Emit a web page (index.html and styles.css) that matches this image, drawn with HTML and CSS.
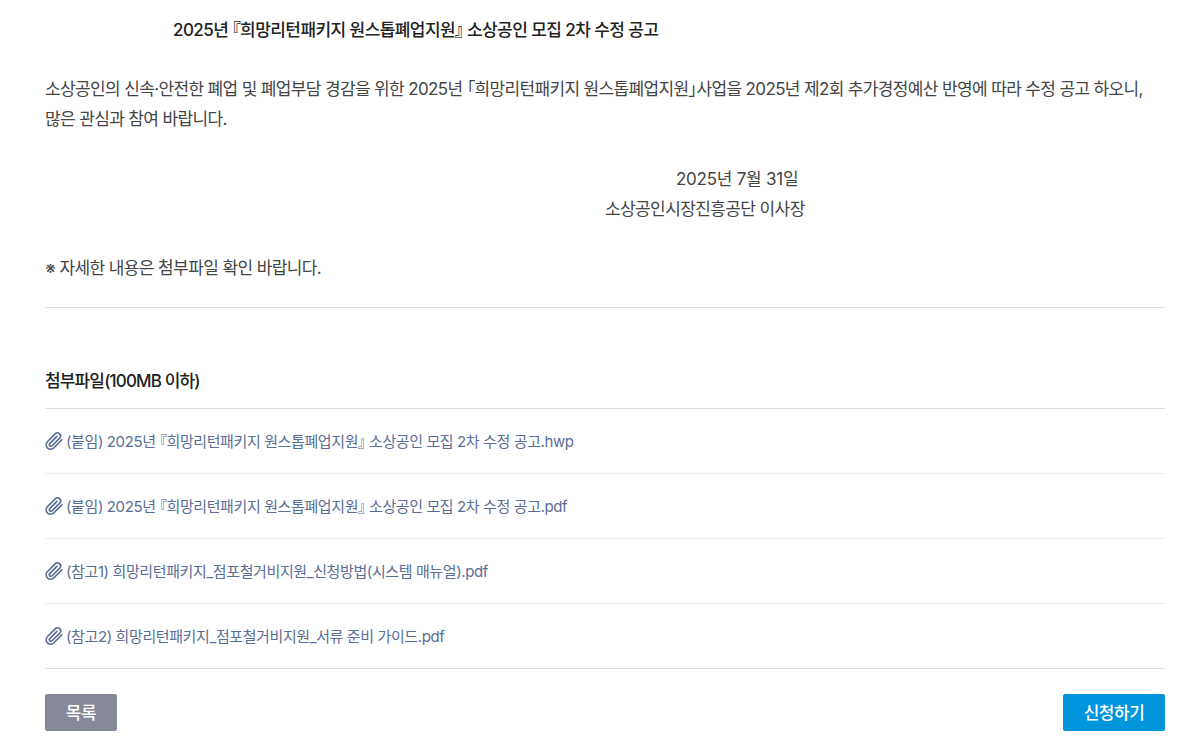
FILE: index.html
```html
<!DOCTYPE html>
<html lang="ko">
	<head>
		<meta charset="utf-8" />
		<title>공고</title>
		<link rel="stylesheet" href="styles.css">
	</head>
	<body>
		<div class="view">
			<!-- 본문 -->
			<div class="content">
				<p class="title">2025년 『희망리턴패키지 원스톱폐업지원』 소상공인 모집 2차 수정 공고</p>
				<p class="lead">소상공인의 신속·안전한 폐업 및 폐업부담 경감을 위한 2025년 「희망리턴패키지 원스톱폐업지원」사업을 2025년 제2회 추가경정예산 반영에 따라 수정 공고 하오니, 많은 관심과 참여 바랍니다.</p>
				<p class="date">2025년 7월 31일</p>
				<p class="sign">소상공인시장진흥공단 이사장</p>
				<p class="note">※ 자세한 내용은 첨부파일 확인 바랍니다.</p>
			</div>
			<!-- 첨부파일 -->
			<div class="files">
				<h3 class="files-title">첨부파일(100MB 이하)</h3>
				<ul class="file-list">
					<li class="file-item">
						<svg class="clip" viewBox="0 0 24 24"><use href="#clip"></use></svg>
						<a class="file-name">(붙임) 2025년 『희망리턴패키지 원스톱폐업지원』 소상공인 모집 2차 수정 공고.hwp</a>
					</li>
					<li class="file-item">
						<svg class="clip" viewBox="0 0 24 24"><use href="#clip"></use></svg>
						<a class="file-name">(붙임) 2025년 『희망리턴패키지 원스톱폐업지원』 소상공인 모집 2차 수정 공고.pdf</a>
					</li>
					<li class="file-item">
						<svg class="clip" viewBox="0 0 24 24"><use href="#clip"></use></svg>
						<a class="file-name">(참고1) 희망리턴패키지_점포철거비지원_신청방법(시스템 매뉴얼).pdf</a>
					</li>
					<li class="file-item">
						<svg class="clip" viewBox="0 0 24 24"><use href="#clip"></use></svg>
						<a class="file-name">(참고2) 희망리턴패키지_점포철거비지원_서류 준비 가이드.pdf</a>
					</li>
				</ul>
			</div>
			<!-- 버튼 -->
			<div class="buts">
				<a class="but but-list">목록</a>
				<a class="but but-apply">신청하기</a>
			</div>
		</div>
		<svg class="defs" width="0" height="0">
			<symbol id="clip" viewBox="0 0 24 24">
				<path d="M21.5 10.5l-9.6 9.6a5.2 5.2 0 0 1-7.9-7.2l9.4-9.4a3.7 3.7 0 0 1 5.5 5l-9.2 9.2a1.9 1.9 0 0 1-2.8-2.6l8.6-8.6" fill="none" stroke="currentColor" stroke-width="2" stroke-linecap="round" stroke-linejoin="round"/>
			</symbol>
		</svg>
	</body>
</html>
```

FILE: styles.css
```css
html,
body {
	margin: 0;
	padding: 0;
	background: #fff;
}
body {
	font-family: Inter, "Noto Sans CJK KR", "Noto Sans", sans-serif;
	font-feature-settings: "palt";
	color: #444;
}
.defs {
	position: absolute;
}
.view {
	padding: 15px 34px 0 45px;
}
.content {
	border-bottom: 1px solid #ddd;
	padding-bottom: 24px;
}
.content p {
	margin: 0;
	font-size: 17px;
	line-height: 30px;
	letter-spacing: -0.64px;
}
.content .title {
	color: #222;
	font-weight: 500;
	padding-left: 128px;
	margin-bottom: 29px;
	letter-spacing: -0.57px;
}
.content .lead {
	margin-bottom: 30px;
	max-width: 1105px;
}
.content .date {
	padding-left: 631px;
	letter-spacing: -0.25px;
}
.content .sign {
	padding-left: 560px;
	margin-bottom: 29px;
	letter-spacing: -0.6px;
}
.content .note {
	letter-spacing: -0.6px;
}
.files {
	margin-top: 58px;
}
.files-title {
	margin: 0;
	font-size: 17px;
	font-weight: 500;
	line-height: 30px;
	letter-spacing: -0.85px;
	color: #222;
	padding-bottom: 12px;
	border-bottom: 1px solid #ddd;
}
.file-list {
	list-style: none;
	margin: 0;
	padding: 0;
	border-bottom: 1px solid #ddd;
}
.file-item {
	display: flex;
	align-items: center;
	height: 62px;
	padding-bottom: 2px;
	gap: 2px;
	color: #5a6d94;
	border-bottom: 1px solid #eee;
}
.file-item:last-child {
	border-bottom: 0;
}
.clip {
	width: 20px;
	height: 20px;
	margin-left: -1px;
	margin-top: 2px;
	flex: none;
}
.file-name {
	font-size: 15px;
	letter-spacing: -0.39px;
}
.buts {
	display: flex;
	justify-content: space-between;
	margin-top: 25px;
	padding-bottom: 17px;
}
.but {
	display: flex;
	align-items: center;
	justify-content: center;
	height: 35px;
	padding-bottom: 2px;
	border-radius: 2px;
	color: #fff;
	font-size: 17px;
	font-weight: 500;
	letter-spacing: -0.5px;
}
.but-list {
	width: 72px;
	background: #858997;
}
.but-apply {
	width: 102px;
	background: #0095dc;
}
```
